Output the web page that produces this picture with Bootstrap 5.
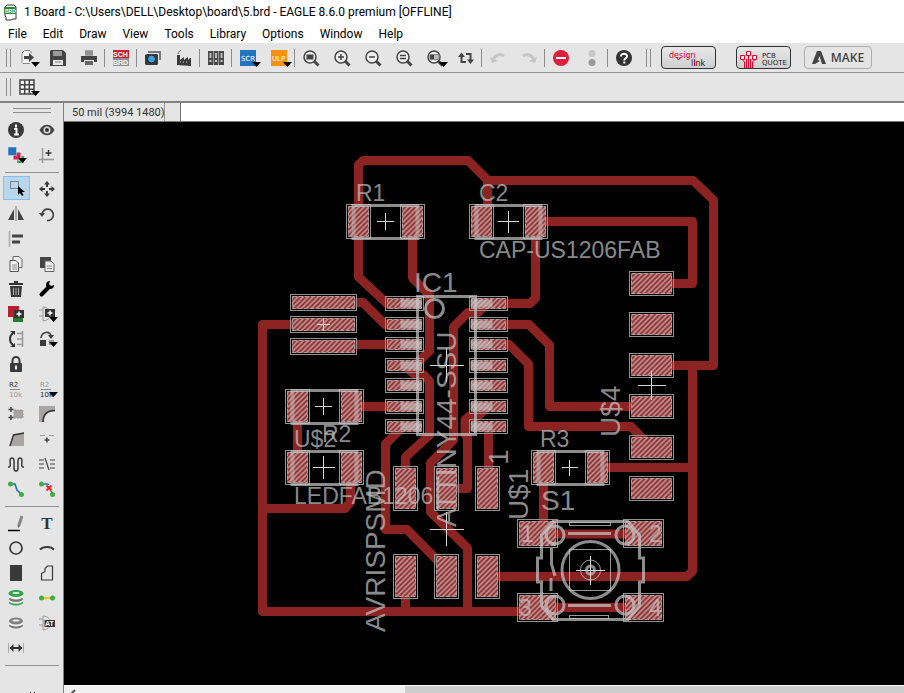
<!DOCTYPE html>
<html lang="en">
<head>
<meta charset="utf-8">
<meta name="viewport" content="width=device-width, initial-scale=1">
<title>1 Board - EAGLE</title>
<link rel="stylesheet" href="https://cdn.jsdelivr.net/npm/bootstrap@5.3.0/dist/css/bootstrap.min.css">
<style>
body{font-family:Roboto,"Open Sans",sans-serif;font-size:12px;line-height:16px;color:#000;background:#fff}
.titlebar{height:24px;padding-left:4px;gap:7px}
.menubar{height:19px;padding-left:8px;gap:16px}
.menubar a{color:#000}
.bar{background:#e5e5e5;padding-left:6px;border-bottom:1px solid #929292}
.bar-main{height:30px}
.bar-sub{height:30px;border-bottom:2px solid #828282}
.grip{width:5px;height:18px;border-left:1px solid #8d8d8d;border-right:1px solid #8d8d8d}
.grip-late{margin-left:7px;margin-right:10px}
.divide{width:1px;height:18px;background:#8d8d8d}
.tool{width:31px;height:25px}
.tool svg,.titlebar svg{overflow:visible}
.badge-btn{width:55px;height:23px;background:linear-gradient(#e8e8e8,#cfcfcf);border:1px solid #333}
.badge-quote{margin-left:20px}
.make-btn{width:68px;height:23px;margin-left:13px;border:1px solid #adadad;background:#e5e5e5;color:#444;font-family:"Open Sans",sans-serif;font-size:12px;font-weight:600;gap:5px}
.side{width:64px;background:#e5e5e5;border-right:1px solid #808080;padding-top:5px}
.side-grip{width:38px;height:5px;margin:0 0 4px 13px;border-top:1px solid #8d8d8d;border-bottom:1px solid #8d8d8d}
.tools{display:grid;grid-template-columns:31px 31px}
.side-rule{height:1px;background:#929292;margin:5px 4px 3px 5px}
.picked{width:27px;height:24px;margin-left:3px;background:#b8d6ee;border:1px solid #80bff0}
.coords{height:19px;background:#e5e5e5;border-bottom:1px solid #777}
.coord-text{width:101px;padding-left:8px;padding-top:2px;font-size:11px;color:#333;border-right:1px solid #999;white-space:nowrap}
.cmd{margin-left:15px;border:0;border-left:1px solid #777;background:#fff;outline:0;font-size:11px}
.scroller{height:8px;background:#f0f0f0;border-top:1px solid #fff}
.thumb{width:59.4%;background:#cdcdcd}
.board{background:#000}
.trace{fill:none;stroke:#8c2323;stroke-width:9;stroke-linejoin:round}
.silk{fill:none;stroke:#c8c8c8;stroke-opacity:.7;stroke-width:3}
.silk-end{fill:none;stroke:#c8c8c8;stroke-opacity:.45;stroke-width:4}
.fine{fill:none;stroke:#c8c8c8;stroke-opacity:.75;stroke-width:1}
.cross{fill:none;stroke:#d8d8d8;stroke-width:1}
.lab{fill:#c8c8c8;fill-opacity:.7;font-family:"Liberation Sans",Arial,sans-serif;font-size:23px}
.big{font-size:28px}
.pad-edge{fill:none;stroke:#929292}
.pad-fill{fill:url(#hatch);stroke:#bb9696;stroke-dasharray:5 1}
.lead-area{fill:#c8c8c8;fill-opacity:.6}
</style>
<script src="https://cdn.jsdelivr.net/npm/bootstrap@5.3.0/dist/js/bootstrap.bundle.min.js"></script>
</head>
<body class="d-flex flex-column vh-100 overflow-hidden">
<svg width="0" height="0" class="position-absolute" aria-hidden="true">
<defs>
<path id="drop" d="M12 12h9l-4.500 5z" fill="#000"/>
<g id="lens"><circle cx="7" cy="7" r="6" fill="#eee" stroke="#444" stroke-width="1.500"/><path d="M11 11l4.500 4.500" stroke="#444" stroke-width="3"/></g>
</defs>
</svg>

<header>
<div class="titlebar d-flex align-items-center">
<svg width="13" height="17" viewBox="0 0 13 17" aria-hidden="true"><path d="M3 1h7l2 2v12H9l-2 1H2V13L1 12V3z" fill="#fff" stroke="#333"/><rect x="0" y="3" width="12" height="7" rx="1" fill="#2c8a35"/><text x="1" y="9" font-size="5" font-weight="700" fill="#fff" font-family="Liberation Sans, sans-serif">BRD</text></svg>
<span class="text-nowrap">1 Board - C:\Users\DELL\Desktop\board\5.brd - EAGLE 8.6.0 premium [OFFLINE]</span>
</div>
<nav class="menubar d-flex align-items-center" aria-label="Menu">
<a class="text-decoration-none" href="#">File</a><a class="text-decoration-none" href="#">Edit</a><a class="text-decoration-none" href="#">Draw</a><a class="text-decoration-none" href="#">View</a><a class="text-decoration-none" href="#">Tools</a><a class="text-decoration-none" href="#">Library</a><a class="text-decoration-none" href="#">Options</a><a class="text-decoration-none" href="#">Window</a><a class="text-decoration-none" href="#">Help</a>
</nav>
<div class="bar bar-main d-flex align-items-center" role="toolbar" aria-label="Main">
<span class="grip"></span>
<button class="tool btn p-0 border-0 rounded-0 d-flex align-items-center justify-content-center" aria-label="Open"><svg width="16" height="16"><path d="M12 3.500V1.500L11 .500H5.500L3 3v9.500l1 1h7" fill="#f4f4f4" stroke="#888"/><path d="M5 6h5V3l5 4.500-5 4.500V9H5z" fill="#444"/><use href="#drop"/></svg></button>
<button class="tool btn p-0 border-0 rounded-0 d-flex align-items-center justify-content-center" aria-label="Save"><svg width="16" height="16"><path d="M1 0h12l3 3v13H0V1z" fill="#444"/><path d="M3 1h9v5H3z" fill="#999"/><path d="M3 10h10v5H3z" fill="#e5e5e5"/><path d="M5 12h6" stroke="#888"/></svg></button>
<button class="tool btn p-0 border-0 rounded-0 d-flex align-items-center justify-content-center" aria-label="Print"><svg width="16" height="16"><path d="M4 0h8v6H4z" fill="#aaa"/><path d="M4 2h8M4 4h8" stroke="#777"/><path d="M0 6h16v6h-3v-2H3v2H0z" fill="#444"/><path d="M4 11h8v4H4z" fill="#666"/></svg></button>
<span class="divide"></span>
<button class="tool btn p-0 border-0 rounded-0 d-flex align-items-center justify-content-center" aria-label="Schematic"><svg width="16" height="16" font-family="Liberation Sans, sans-serif" font-size="7" font-weight="700" fill="#fff"><rect width="16" height="8" fill="#c7202f"/><rect y="8" width="16" height="8" fill="#909090"/><text x="0" y="7">SCH</text><text x="0" y="15">BRD</text></svg></button>
<span class="divide"></span>
<button class="tool btn p-0 border-0 rounded-0 d-flex align-items-center justify-content-center" aria-label="CAM"><svg width="16" height="16"><path d="M3 3V1h13v9h-2V3z" fill="#777"/><path d="M0 5l2-1h10l1 1v9l-1 1H1l-1-1z" fill="#3a3a3a"/><circle cx="6.500" cy="9" r="4" fill="#35a0e8" stroke="#222"/></svg></button>
<button class="tool btn p-0 border-0 rounded-0 d-flex align-items-center justify-content-center" aria-label="Manufacturing"><svg width="16" height="16"><path d="M1 15V5h3v5l4-3v3l4-3v3l2-2h1v8z" fill="#3a3a3a"/><path d="M2 4c0-3 2-2 3-4" fill="none" stroke="#666"/><path d="M4 12h1M7 12h1M10 12h1" stroke="#ddd"/></svg></button>
<span class="divide"></span>
<button class="tool btn p-0 border-0 rounded-0 d-flex align-items-center justify-content-center" aria-label="Library"><svg width="16" height="16"><path d="M0 1h5v14H0zM5.500 1h5v14h-5zM11 1h5v14h-5z" fill="#484848"/><path d="M1.500 3h2v5h-2zM7 3h2v5H7zM12.500 3h2v5h-2z" fill="#bbb"/><path d="M1.500 11h2M7 11h2M12.500 11h2" stroke="#ccc" stroke-width="2"/></svg></button>
<span class="divide"></span>
<button class="tool btn p-0 border-0 rounded-0 d-flex align-items-center justify-content-center" aria-label="Script"><svg width="16" height="16"><rect width="16" height="16" fill="#2473bd"/><text x="1" y="11" font-size="7" font-family="DejaVu Sans, sans-serif" fill="#fff">SCR</text><use href="#drop"/></svg></button>
<button class="tool btn p-0 border-0 rounded-0 d-flex align-items-center justify-content-center" aria-label="ULP"><svg width="16" height="16"><rect width="16" height="16" fill="#f6920f"/><text x="1" y="11" font-size="7" font-family="DejaVu Sans, sans-serif" fill="#fff">ULP</text><use href="#drop"/></svg></button>
<span class="divide"></span>
<button class="tool btn p-0 border-0 rounded-0 d-flex align-items-center justify-content-center" aria-label="Fit"><svg width="16" height="16"><use href="#lens"/><path d="M3.500 4.500h7v5h-7z" fill="#444"/></svg></button>
<button class="tool btn p-0 border-0 rounded-0 d-flex align-items-center justify-content-center" aria-label="Zoom in"><svg width="16" height="16"><use href="#lens"/><path d="M4 7h6M7 4v6" stroke="#444" stroke-width="1.500"/></svg></button>
<button class="tool btn p-0 border-0 rounded-0 d-flex align-items-center justify-content-center" aria-label="Zoom out"><svg width="16" height="16"><use href="#lens"/><path d="M4 7h6" stroke="#444" stroke-width="1.500"/></svg></button>
<button class="tool btn p-0 border-0 rounded-0 d-flex align-items-center justify-content-center" aria-label="Redraw"><svg width="16" height="16"><use href="#lens"/><path d="M4 5.500h6M4 8.500h6" stroke="#444" stroke-width="1.500"/></svg></button>
<button class="tool btn p-0 border-0 rounded-0 d-flex align-items-center justify-content-center" aria-label="Select zoom"><svg width="16" height="16"><use href="#lens"/><path d="M3 4.500h9v5H3z" fill="#bbb" stroke="#888"/><path d="M3 5h4v4H3z" fill="#444"/><use href="#drop"/></svg></button>
<button class="tool btn p-0 border-0 rounded-0 d-flex align-items-center justify-content-center" aria-label="Refresh"><svg width="16" height="16"><path d="M3.500 6v6H8M12.500 10V4H8" fill="none" stroke="#444" stroke-width="2"/><path d="M0 7l3.500-4.500L7 7zM9 9.500h7L12.500 14z" fill="#444"/></svg></button>
<span class="divide"></span>
<button class="tool btn p-0 border-0 rounded-0 d-flex align-items-center justify-content-center" aria-label="Undo"><svg width="16" height="16"><path d="M3 10C5 5 10 3 14 6" fill="none" stroke="#c6c6c6" stroke-width="3"/><path d="M0 7l2 6 6-2z" fill="#c6c6c6"/></svg></button>
<button class="tool btn p-0 border-0 rounded-0 d-flex align-items-center justify-content-center" aria-label="Redo"><svg width="16" height="16"><path d="M13 10C11 5 6 3 2 6" fill="none" stroke="#c6c6c6" stroke-width="3"/><path d="M16 7l-2 6-6-2z" fill="#c6c6c6"/></svg></button>
<span class="divide"></span>
<button class="tool btn p-0 border-0 rounded-0 d-flex align-items-center justify-content-center" aria-label="Stop"><svg width="16" height="16"><circle cx="8" cy="8" r="8" fill="#de1f3c"/><path d="M3 8h10" stroke="#fff" stroke-width="2"/></svg></button>
<button class="tool btn p-0 border-0 rounded-0 d-flex align-items-center justify-content-center" aria-label="Go"><svg width="16" height="16"><circle cx="8" cy="3.500" r="3.500" fill="#c6c6c6"/><circle cx="8" cy="12.500" r="3.500" fill="#999"/></svg></button>
<span class="divide"></span>
<button class="tool btn p-0 border-0 rounded-0 d-flex align-items-center justify-content-center" aria-label="Help"><svg width="16" height="16"><circle cx="8" cy="8" r="8" fill="#333"/><path d="M5 6.500C5 2.500 11.500 3 11 6.500C10.800 8.300 8.300 8 8.300 10.500" fill="none" stroke="#fff" stroke-width="2"/><path d="M8.300 11.500v2" stroke="#fff" stroke-width="2"/></svg></button>
<span class="grip grip-late"></span>
<button class="badge-btn btn p-0 rounded-1 d-flex" aria-label="Design link"><svg width="53" height="21" font-family="DejaVu Sans, sans-serif" font-size="8"><text x="7" y="11" fill="#e4002b">design</text><text x="29" y="19" fill="#111">link</text><path d="M14 10l2.500 3 2.500-3M32.500 13v6" stroke="#e4002b" fill="none"/></svg></button>
<button class="badge-btn badge-quote btn p-0 rounded-1 d-flex" aria-label="PCB quote"><svg width="53" height="21"><path d="M5.500 12v1l2 2v6M9.500 21V12M11.500 21V8M13.500 21V12M17.500 12v1l-2 2v6" fill="none" stroke="#e4002b"/><path d="M3.500 8.500h4v4h-4zM9.500 4.500h4v4h-4zM15.500 8.500h4v4h-4z" fill="#fff" stroke="#e4002b"/><g font-family="DejaVu Sans, sans-serif" font-size="7" fill="#222"><text x="25" y="11">PCB</text><text x="25" y="18">QUOTE</text></g></svg></button>
<button class="make-btn btn p-0 rounded-1 d-flex align-items-center justify-content-center"><svg width="14" height="14" aria-hidden="true"><path d="M0 13L5 0h4l5 13h-4L7.500 5 6 9l2 1-5 3z" fill="#444"/></svg>MAKE</button>
</div>
<div class="bar bar-sub d-flex align-items-center">
<span class="grip"></span>
<button class="tool btn p-0 border-0 rounded-0 d-flex align-items-center justify-content-center" aria-label="Grid"><svg width="16" height="16"><path d="M1 1h14v14H1zM1 5.700h14M1 10.300h14M5.700 1v14M10.300 1v14" fill="#f4f4f4" stroke="#444" stroke-width="1.500"/><use href="#drop"/></svg></button>
</div>
</header>

<div class="d-flex flex-fill overflow-hidden">
<aside class="side flex-shrink-0 overflow-hidden">
<div class="side-grip"></div>
<div class="tools">
<button class="tool btn p-0 border-0 rounded-0 d-flex align-items-center justify-content-center" aria-label="Info"><svg width="16" height="16"><circle cx="8" cy="8" r="8" fill="#3a3a3a"/><path d="M8 2.500v3M6 7h2.500v5.500M6 12.500h5" stroke="#fff" stroke-width="2" fill="none"/></svg></button>
<button class="tool btn p-0 border-0 rounded-0 d-flex align-items-center justify-content-center" aria-label="Show"><svg width="16" height="16"><path d="M.500 8C4 1 12 1 15.500 8C12 15 4 15 .500 8z" fill="#444"/><circle cx="8" cy="8" r="3.500" fill="#ddd"/><circle cx="8" cy="8" r="2" fill="#333"/></svg></button>
<button class="tool btn p-0 border-0 rounded-0 d-flex align-items-center justify-content-center" aria-label="Layers"><svg width="16" height="16"><path d="M9 9h7v7H9z" fill="#35a860"/><path d="M5 5h8v8H5z" fill="#d3204d" stroke="#e5e5e5"/><path d="M0 0h8.500v8.500H0z" fill="#2473bd" stroke="#e5e5e5" stroke-width=".500"/><path d="M10 11h9l-4.500 5z"/></svg></button>
<button class="tool btn p-0 border-0 rounded-0 d-flex align-items-center justify-content-center" aria-label="Mark"><svg width="16" height="16"><path d="M3.500 1v15M0 12.500h15" stroke="#999" stroke-width="1.500"/><path d="M9.500 3v6M6.500 6h6" stroke="#333" stroke-width="1.500"/></svg></button>
</div>
<div class="side-rule"></div>
<div class="tools">
<button class="tool picked btn p-0 rounded-0 d-flex align-items-center justify-content-center" aria-label="Group"><svg width="16" height="16"><path d="M1.500 1.500h8v7h-8z" fill="none" stroke="#333" stroke-dasharray="1 1"/><path d="M9 6v9l2-2 2 3 1.500-1-1.500-3h3z" fill="#000"/></svg></button>
<button class="tool btn p-0 border-0 rounded-0 d-flex align-items-center justify-content-center" aria-label="Move"><svg width="16" height="16"><path d="M8 0l3 3.500H9V6H7V3.500H5zM8 16l3-3.500H9V10H7v2.500H5zM0 8l3.500-3v2H6v2H3.500v2zM16 8l-3.500-3v2H10v2h2.500v2z" fill="#3a3a3a"/></svg></button>
<button class="tool btn p-0 border-0 rounded-0 d-flex align-items-center justify-content-center" aria-label="Mirror"><svg width="16" height="16"><path d="M8 0v15" stroke="#999" stroke-width="1.500"/><path d="M6 3v11H0zM10 3v11h6z" fill="#444"/></svg></button>
<button class="tool btn p-0 border-0 rounded-0 d-flex align-items-center justify-content-center" aria-label="Rotate"><svg width="16" height="16"><path d="M3 8A5.700 5.700 0 1 1 8 14.500" fill="none" stroke="#444" stroke-width="1.700"/><path d="M0 7h6l-3 4z" fill="#444"/></svg></button>
<button class="tool btn p-0 border-0 rounded-0 d-flex align-items-center justify-content-center" aria-label="Align"><svg width="16" height="16"><path d="M1.500 0v16" stroke="#aaa" stroke-width="1.500"/><path d="M4 5h11M4 11h8" stroke="#444" stroke-width="3"/></svg></button>
<span></span>
<button class="tool btn p-0 border-0 rounded-0 d-flex align-items-center justify-content-center" aria-label="Copy"><svg width="16" height="16"><path d="M5 .500h6l3 3v8H5z" fill="#eee" stroke="#666"/><path d="M2 4.500h6l2.500 2.500v8.500H2z" fill="#f4f4f4" stroke="#555"/><path d="M4 9h5M4 11h5M4 13h5" stroke="#888"/></svg></button>
<button class="tool btn p-0 border-0 rounded-0 d-flex align-items-center justify-content-center" aria-label="Paste"><svg width="16" height="16"><path d="M1 1h11v11H1z" fill="#444"/><path d="M6 5h6l3 3v7.500H6z" fill="#eee" stroke="#666"/><path d="M8 10h5M8 12.500h5" stroke="#888"/></svg></button>
<button class="tool btn p-0 border-0 rounded-0 d-flex align-items-center justify-content-center" aria-label="Delete"><svg width="16" height="16"><path d="M1 3h14M6 1h4" stroke="#333" stroke-width="2"/><path d="M2 5h12l-1 11H3z" fill="#3a3a3a"/><path d="M5.500 7v7M8 7v7M10.500 7v7" stroke="#aaa"/></svg></button>
<button class="tool btn p-0 border-0 rounded-0 d-flex align-items-center justify-content-center" aria-label="Change"><svg width="16" height="16"><path d="M2.500 13.500l7-7" stroke="#000" stroke-width="4" stroke-linecap="round"/><path d="M15 4a4 4 0 1 1-4-4l-1 3 2 2z" fill="#000"/></svg></button>
<button class="tool btn p-0 border-0 rounded-0 d-flex align-items-center justify-content-center" aria-label="Add"><svg width="16" height="16"><path d="M0 0h11v11H0z" fill="#b8202c"/><path d="M5 11h10v5H5z" fill="#237c30"/><path d="M6 4h10v8H6z" fill="#333"/><path d="M11 5.500v5M8.500 8h5" stroke="#fff" stroke-width="1.500"/></svg></button>
<button class="tool btn p-0 border-0 rounded-0 d-flex align-items-center justify-content-center" aria-label="Replace"><svg width="16" height="16"><path d="M0 4h4M0 10h4M4 1v14C10 14 12 11 12 8S9 1 4 1z" fill="none" stroke="#999"/><path d="M6 3h10v8H6z" fill="#333"/><path d="M11 4.500v5M8.500 7h5" stroke="#fff" stroke-width="1.500"/><path d="M10 11h9l-4.500 5z"/></svg></button>
<button class="tool btn p-0 border-0 rounded-0 d-flex align-items-center justify-content-center" aria-label="Pinswap"><svg width="16" height="16"><path d="M14.500 0v16M9 2.500h6M9 8h6M9 13.500h6" stroke="#999" stroke-width="1.500"/><path d="M5 2C1 5 1 11 5 14" fill="none" stroke="#333" stroke-width="2"/><path d="M2 0h5v4zM2 16h5v-4z" fill="#333"/></svg></button>
<button class="tool btn p-0 border-0 rounded-0 d-flex align-items-center justify-content-center" aria-label="Gateswap"><svg width="16" height="16"><path d="M2 7C3 0 11 0 12 5" fill="none" stroke="#444" stroke-width="1.700"/><path d="M9 4h6l-3 4zM1 9h6v6H1z" fill="#3a3a3a"/><path d="M10 9h5v5h-5z" fill="#999"/><path d="M10 11h9l-4.500 5z"/></svg></button>
<button class="tool btn p-0 border-0 rounded-0 d-flex align-items-center justify-content-center" aria-label="Lock"><svg width="16" height="16"><path d="M4.500 8V4.500a3.500 3.500 0 0 1 7 0V8" fill="none" stroke="#3a3a3a" stroke-width="2"/><rect x="2" y="7" width="12" height="9" rx="1" fill="#3a3a3a"/><path d="M8 9.500v4" stroke="#eee" stroke-width="2"/></svg></button>
<span></span>
<button class="tool btn p-0 border-0 rounded-0 d-flex align-items-center justify-content-center" aria-label="Name"><svg width="16" height="16" font-family="DejaVu Sans, sans-serif" font-size="7"><text x="1" y="6" fill="#333">R2</text><path d="M2 8.500h10" stroke="#888"/><text x="1" y="16" fill="#999">10k</text></svg></button>
<button class="tool btn p-0 border-0 rounded-0 d-flex align-items-center justify-content-center" aria-label="Value"><svg width="16" height="16" font-family="DejaVu Sans, sans-serif" font-size="7"><text x="1" y="6" fill="#999">R2</text><path d="M2 8.500h10" stroke="#888"/><text x="1" y="16" fill="#222">10k</text><path d="M10 11h9l-4.500 5z"/></svg></button>
<button class="tool btn p-0 border-0 rounded-0 d-flex align-items-center justify-content-center" aria-label="Smash"><svg width="16" height="16"><path d="M3 1v5M.500 3.500h5M3 9v5M.500 11.500h5" stroke="#444" stroke-width="1.500"/><path d="M6 4h9v8H6z" fill="#a8a3a3" stroke="#999" stroke-dasharray="2 1"/></svg></button>
<button class="tool btn p-0 border-0 rounded-0 d-flex align-items-center justify-content-center" aria-label="Miter"><svg width="16" height="16"><path d="M0 0h16v5C8 5 5 9 5 16H0z" fill="#aaa5a5"/><path d="M4 16C4 9 8 4.500 16 4.500" fill="none" stroke="#333" stroke-width="1.500"/></svg></button>
<button class="tool btn p-0 border-0 rounded-0 d-flex align-items-center justify-content-center" aria-label="Split"><svg width="16" height="16"><path d="M3 15L6 4l10-2v13z" fill="#aaa5a5"/><path d="M2 15L5.500 4 16 2" fill="none" stroke="#333" stroke-width="1.500"/></svg></button>
<button class="tool btn p-0 border-0 rounded-0 d-flex align-items-center justify-content-center" aria-label="Optimize"><svg width="16" height="16"><path d="M1 4.500h5M10 4.500h5" stroke="#999"/><path d="M8 6.500v5M5.500 9h5" stroke="#444" stroke-width="1.500"/></svg></button>
<button class="tool btn p-0 border-0 rounded-0 d-flex align-items-center justify-content-center" aria-label="Meander"><svg width="16" height="16"><path d="M0 11h1c2 0 1-3 1-6 0-4 4-4 4 0v7c0 4 4 4 4 0V5c0-4 4-4 4 0 0 3-1 6 1 6h1" fill="none" stroke="#3a3a3a" stroke-width="1.500"/></svg></button>
<button class="tool btn p-0 border-0 rounded-0 d-flex align-items-center justify-content-center" aria-label="Slice"><svg width="16" height="16"><path d="M0 4h5M0 8h5M0 12h5M11 4h5M11 8h5M11 12h5M6 2l4 12" fill="none" stroke="#444" stroke-width="1.200"/></svg></button>
<button class="tool btn p-0 border-0 rounded-0 d-flex align-items-center justify-content-center" aria-label="Route"><svg width="16" height="16"><path d="M2 3h5l2 6 5 5" fill="none" stroke="#2473bd" stroke-width="1.700"/><circle cx="2.500" cy="3" r="2.500" fill="#3fae3f"/><circle cx="13.500" cy="13.500" r="2.500" fill="#3fae3f"/></svg></button>
<button class="tool btn p-0 border-0 rounded-0 d-flex align-items-center justify-content-center" aria-label="Ripup"><svg width="16" height="16"><path d="M2 3h7l5 11" fill="none" stroke="#2473bd" stroke-width="1.700"/><circle cx="2.500" cy="3" r="2.500" fill="#3fae3f"/><circle cx="13.500" cy="13.500" r="2.500" fill="#3fae3f"/><path d="M7 4h6v6H7z" fill="#f4eaea"/><path d="M7.500 4.500l5 5M12.500 4.500l-5 5" stroke="#e22" stroke-width="2"/></svg></button>
</div>
<div class="side-rule"></div>
<div class="tools">
<button class="tool btn p-0 border-0 rounded-0 d-flex align-items-center justify-content-center" aria-label="Line"><svg width="16" height="16"><path d="M0 15.500h12" stroke="#000" stroke-width="1.500"/><path d="M14 1l-3 9" stroke="#888" stroke-width="3"/><path d="M9.500 9.500l3 1-2.500 2.500z" fill="#666"/></svg></button>
<button class="tool btn p-0 border-0 rounded-0 d-flex align-items-center justify-content-center" aria-label="Text"><svg width="16" height="16"><text x="8" y="14" text-anchor="middle" font-family="Liberation Serif, serif" font-size="17" font-weight="700" fill="#333">T</text></svg></button>
<button class="tool btn p-0 border-0 rounded-0 d-flex align-items-center justify-content-center" aria-label="Circle"><svg width="16" height="16"><circle cx="8" cy="8" r="6" fill="none" stroke="#3a3a3a" stroke-width="1.700"/></svg></button>
<button class="tool btn p-0 border-0 rounded-0 d-flex align-items-center justify-content-center" aria-label="Arc"><svg width="16" height="16"><path d="M1 9.500C4 6 12 6 15 9.500" fill="none" stroke="#3a3a3a" stroke-width="2"/></svg></button>
<button class="tool btn p-0 border-0 rounded-0 d-flex align-items-center justify-content-center" aria-label="Rectangle"><svg width="16" height="16"><path d="M2 0h12v16H2z" fill="#3a3a3a"/></svg></button>
<button class="tool btn p-0 border-0 rounded-0 d-flex align-items-center justify-content-center" aria-label="Polygon"><svg width="16" height="16"><path d="M2.500 15V8.500L6 6.500V3.500L8.500 1h5v14z" fill="none" stroke="#3a3a3a" stroke-width="1.200"/></svg></button>
<button class="tool btn p-0 border-0 rounded-0 d-flex align-items-center justify-content-center" aria-label="Via"><svg width="16" height="16"><ellipse cx="8" cy="12.500" rx="7" ry="3" fill="#2ea84a"/><ellipse cx="8" cy="10.700" rx="7" ry="3" fill="#eee"/><ellipse cx="8" cy="9" rx="7" ry="3" fill="#777"/><ellipse cx="8" cy="6.500" rx="7" ry="3" fill="#eee"/><ellipse cx="8" cy="3.500" rx="7.500" ry="3.500" fill="#2ea84a"/><ellipse cx="8" cy="3" rx="3.500" ry="1" fill="#e0f0e0"/></svg></button>
<button class="tool btn p-0 border-0 rounded-0 d-flex align-items-center justify-content-center" aria-label="Signal"><svg width="16" height="16"><path d="M2 8h12" stroke="#f7c600" stroke-width="2"/><circle cx="2.500" cy="8" r="2.500" fill="#3fae3f"/><circle cx="13.500" cy="8" r="2.500" fill="#3fae3f"/></svg></button>
<button class="tool btn p-0 border-0 rounded-0 d-flex align-items-center justify-content-center" aria-label="Hole"><svg width="16" height="16"><ellipse cx="8" cy="10.500" rx="7" ry="3" fill="#777"/><ellipse cx="8" cy="8.500" rx="7" ry="3" fill="#eee"/><ellipse cx="8" cy="6" rx="7" ry="3.500" fill="#808080"/><ellipse cx="8" cy="5.500" rx="3.500" ry="1" fill="#eee"/></svg></button>
<button class="tool btn p-0 border-0 rounded-0 d-flex align-items-center justify-content-center" aria-label="Attribute"><svg width="16" height="16"><path d="M0 4h4M0 10h4M4 1v14C10 14 12 11 12 8S9 1 4 1z" fill="none" stroke="#999"/><path d="M5.500 5H16v7H5.500z" fill="#333"/><text x="6" y="11" font-size="7" font-weight="700" fill="#fff" font-family="Liberation Sans, sans-serif">AT</text></svg></button>
<button class="tool btn p-0 border-0 rounded-0 d-flex align-items-center justify-content-center" aria-label="Dimension"><svg width="16" height="16"><path d="M.500 3v10M15.500 3v10" stroke="#aaa"/><path d="M1.500 8l4-4v3h5V4l4 4-4 4V9h-5v3z" fill="#333"/></svg></button>
</div>
<div class="side-rule"></div>
<svg class="d-block" width="62" height="24" aria-hidden="true"><path d="M30.500 23v2M34.500 23v2" stroke="#000"/></svg>
</aside>

<main class="d-flex flex-column flex-fill overflow-hidden">
<div class="coords d-flex flex-shrink-0">
<label class="coord-text" for="cmd">50 mil (3994 1480)</label>
<input class="cmd flex-fill p-0" id="cmd" type="text" aria-label="Command">
</div>
<div class="board flex-fill overflow-hidden">
<svg class="d-block w-100" viewBox="64 122 840 563" role="img" aria-label="Board layout">
<defs>
<pattern id="hatch" width="5" height="5" patternUnits="userSpaceOnUse"><rect width="5" height="5" fill="#8c2020"/><path d="M-1 1L1-1M-1 6L6-1M4 6L6 4" stroke="#c4a4a4" stroke-width="1.600"/></pattern>
<g id="p-chip"><rect class="pad-edge" width="24" height="34"/><rect class="pad-fill" x="2" y="2" width="20" height="30"/></g>
<g id="p-long"><rect class="pad-edge" width="66" height="16"/><rect class="pad-fill" x="2" y="2" width="62" height="12"/></g>
<g id="p-ic"><rect class="pad-edge" width="38" height="14"/><rect class="pad-fill" x="2" y="2" width="34" height="10"/></g>
<g id="p-tall"><rect class="pad-edge" width="24" height="44"/><rect class="pad-fill" x="2" y="2" width="20" height="40"/></g>
<g id="p-wide"><rect class="pad-edge" width="44" height="24"/><rect class="pad-fill" x="2" y="2" width="40" height="20"/></g>
<g id="p-sw"><rect class="pad-edge" width="40" height="28"/><rect class="pad-fill" x="2" y="2" width="36" height="24"/></g>
<g id="chip"><use href="#p-chip"/><use href="#p-chip" x="54"/><path class="silk" d="M5 1h68M5 34h68"/><path class="silk-end" d="M7 2v30M71 2v30"/></g>
<g id="ic-l"><use href="#p-ic"/><rect class="lead-area" x="15" y="3" width="21" height="8"/></g>
<g id="ic-r"><use href="#p-ic"/><rect class="lead-area" x="1" y="3" width="22" height="8"/></g>
</defs>
<g class="trace">
<path d="M403 303.500H387L358.500 277V165L363 160.500H468L488 180.500H693L713.500 200V365.500H650"/>
<path d="M487.500 180V222M412.500 222V278L429.500 295V351L414 366M405 366L415 375H424L429.500 381V435L405.500 457V490"/>
<path d="M487 303.500L478 312.500H468L453.500 327V440L430.500 463V512L467.500 548V611.500"/>
<path d="M403 426.500L385.500 444V529.500H407L446 569"/>
<path d="M487 407L478 416.500H469L465 420V434L467.500 437V488.500H446M488.500 426V490"/>
<path d="M488 303.500H530L535.500 298V222M488 324.500H529L549.500 345V406.500H650M488 344.500H509L528.500 364V426.500H631L650 446"/>
<path d="M535 221.500H692.500V283.500H650M692.500 365V571L687 576.500H487M596 467.500H692.500M543.500 467V534H643M643 607.500H538"/>
<path d="M323 324.500H262.500V611.500H540M262.500 508.500H345L350.500 502V467M297.500 406V467M350 406.500H403M405.500 576V611"/>
<path d="M323 302.500H363L385 324.500H403M323 344.500H403"/>
</g>
<use href="#p-long" x="290.500" y="294.500"/><use href="#p-long" x="290.500" y="316.500"/><use href="#p-long" x="290.500" y="338.500"/>
<use href="#chip" x="346.500" y="204.500"/><use href="#chip" x="469.500" y="204.500"/><use href="#chip" x="285.500" y="389.500"/><use href="#chip" x="285.500" y="450.500"/><use href="#chip" x="531.500" y="450.500"/>
<use href="#ic-l" x="385.500" y="296.500"/><use href="#ic-l" x="385.500" y="317.500"/><use href="#ic-l" x="385.500" y="337.500"/><use href="#ic-l" x="385.500" y="358.500"/><use href="#ic-l" x="385.500" y="378.500"/><use href="#ic-l" x="385.500" y="399.500"/><use href="#ic-l" x="385.500" y="419.500"/>
<use href="#ic-r" x="469.500" y="296.500"/><use href="#ic-r" x="469.500" y="317.500"/><use href="#ic-r" x="469.500" y="337.500"/><use href="#ic-r" x="469.500" y="358.500"/><use href="#ic-r" x="469.500" y="378.500"/><use href="#ic-r" x="469.500" y="399.500"/><use href="#ic-r" x="469.500" y="419.500"/>
<use href="#p-tall" x="393.500" y="466.500"/><use href="#p-tall" x="434.500" y="466.500"/><use href="#p-tall" x="475.500" y="466.500"/><use href="#p-tall" x="393.500" y="554.500"/><use href="#p-tall" x="434.500" y="554.500"/><use href="#p-tall" x="475.500" y="554.500"/>
<use href="#p-wide" x="629.500" y="271.500"/><use href="#p-wide" x="629.500" y="312.500"/><use href="#p-wide" x="629.500" y="353.500"/><use href="#p-wide" x="629.500" y="394.500"/><use href="#p-wide" x="629.500" y="435.500"/><use href="#p-wide" x="629.500" y="476.500"/>
<use href="#p-sw" x="517.500" y="519.500"/><use href="#p-sw" x="623.500" y="519.500"/><use href="#p-sw" x="517.500" y="593.500"/><use href="#p-sw" x="623.500" y="593.500"/>
<rect class="silk" x="417.500" y="296.500" width="58" height="138"/>
<circle class="silk" cx="434.500" cy="308.500" r="9"/>
<g class="silk">
<circle cx="590.500" cy="570" r="28.500"/><circle cx="590.500" cy="570" r="4"/>
<circle cx="555" cy="535" r="9"/><circle cx="625" cy="535" r="9"/><circle cx="555" cy="605" r="9"/><circle cx="625" cy="605" r="9"/>
<path d="M541.500 535L553 521.500H628L639.500 535V558H643.500V582H639.500V606L628 619.500H553L541.500 606V582H537.500V558H541.500z"/>
<path d="M568 533.500H611M568 605.500H611M551.500 548V564L555 576M551 578V591"/>
</g>
<g class="fine"><rect x="569.500" y="549.500" width="41" height="41"/><rect x="569.500" y="522.500" width="41" height="3"/><rect x="569.500" y="615.500" width="39" height="3"/><circle cx="590.500" cy="570" r="10"/></g>
<path class="cross" d="M377 221.500h17M385.500 213v17M498 221.500h21M508.500 211v22M317 324.500h13M323.500 318v13M430 365.500h34M446.500 348v34M430 529.500h34M446.500 512v34M315 406.500h17M323.500 398v17M313 467.500h22M323.500 456v23M562 467.500h16M569.500 460v16M638 385.500h28M651.500 371v29M576 570.500h29M590.500 556v29"/>
<g class="lab">
<text x="356" y="201">R1</text><text x="479" y="201">C2</text><text x="479" y="258">CAP-US1206FAB</text><text x="294" y="447">U$2</text><text x="322" y="442">R2</text><text x="294" y="504">LEDFAB1206</text><text x="540" y="447">R3</text>
<text x="521" y="542">1</text><text x="649" y="542">2</text><text x="519" y="616">3</text><text x="649" y="616">4</text>
<g class="big"><text x="414" y="292">IC1</text><text x="541" y="510">S1</text><text transform="translate(508 465)rotate(-90)">1</text><text transform="translate(528 520)rotate(-90)">U$1</text><text transform="translate(620 437)rotate(-90)">U$4</text><text transform="translate(385 632)rotate(-90)">AVRISPSMD</text><text transform="translate(456 527)rotate(-90)">ATTINY44-SSU</text></g>
</g>
</svg>
</div>
<div class="scroller d-flex flex-shrink-0 justify-content-between overflow-hidden">
<svg width="16" height="8" aria-hidden="true"><path d="M11 4L7 8" stroke="#555" stroke-width="2"/></svg>
<div class="thumb"></div>
</div>
</main>
</div>
</body>
</html>
